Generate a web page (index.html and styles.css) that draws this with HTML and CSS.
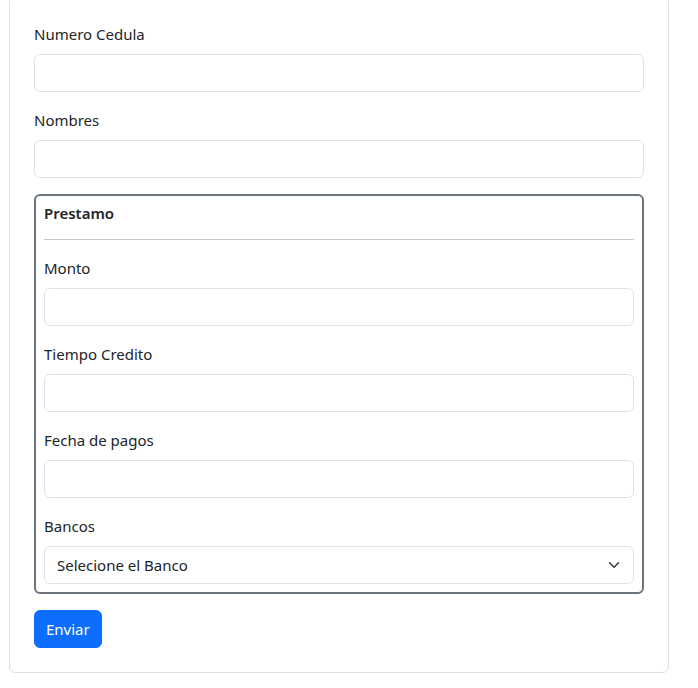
FILE: index.html
```html
<!DOCTYPE html>
<html lang="es">
<head>
<meta charset="utf-8">
<title>Formulario</title>
<link rel="stylesheet" href="styles.css">
</head>
<body>
<div class="card">
  <form class="card-body">
    <div class="field">
      <label class="form-label" for="cedula">Numero Cedula</label>
      <input class="form-control" id="cedula" type="text">
    </div>
    <div class="field">
      <label class="form-label" for="nombres">Nombres</label>
      <input class="form-control" id="nombres" type="text">
    </div>
    <fieldset class="group">
      <h6 class="group-title">Prestamo</h6>
      <hr class="divider">
      <div class="field">
        <label class="form-label" for="monto">Monto</label>
        <input class="form-control" id="monto" type="text">
      </div>
      <div class="field">
        <label class="form-label" for="tiempo">Tiempo Credito</label>
        <input class="form-control" id="tiempo" type="text">
      </div>
      <div class="field">
        <label class="form-label" for="fecha">Fecha de pagos</label>
        <input class="form-control" id="fecha" type="text">
      </div>
      <div class="field last">
        <label class="form-label" for="banco">Bancos</label>
        <div class="select-wrap">
          <select class="form-select" id="banco">
            <option>Selecione el Banco</option>
          </select>
          <svg class="chev" width="12" height="12" viewBox="0 0 16 16"><path fill="none" stroke="#343a40" stroke-linecap="round" stroke-linejoin="round" stroke-width="2" d="m2 5 6 6 6-6"/></svg>
        </div>
      </div>
    </fieldset>
    <button class="btn" type="button">Enviar</button>
  </form>
</div>
</body>
</html>
```
FILE: styles.css
```css
* { box-sizing: border-box; }
html, body { margin: 0; padding: 0; background: #fff; }
body {
  font-family: "Noto Sans", "Open Sans", Arial, sans-serif;
  font-size: 16px;
  line-height: 1.5;
  color: #212529;
}
.card {
  margin: -3px 0 0 9px;
  width: 660px;
  border: 1px solid #dfdfdf;
  border-radius: 6px;
  background: #fff;
}
.card-body {
  padding: 24px;
  display: block;
  margin: 0;
}
.field { margin-bottom: 16px; }
.field.last { margin-bottom: 0; }
.form-label {
  display: block;
  margin-bottom: 8px;
  font-size: 15px;
  line-height: 24px;
}
.form-control, .form-select {
  display: block;
  width: 100%;
  height: 38px;
  padding: 6px 12px;
  font: inherit;
  font-size: 15px;
  color: #212529;
  background: #fff;
  border: 1px solid #dee2e6;
  border-radius: 6px;
  outline: none;
}
.select-wrap { position: relative; }
.form-select {
  appearance: none;
  -webkit-appearance: none;
  padding-right: 36px;
}
.chev {
  position: absolute;
  right: 14px;
  top: 13px;
  width: 12px;
  height: 12px;
  pointer-events: none;
}
.group {
  margin: 0 0 16px;
  padding: 8px;
  border: 2px solid #6c757d;
  border-radius: 6px;
  min-width: 0;
}
.group-title {
  margin: 0 0 8px;
  font-size: 15px;
  font-weight: 600;
  line-height: 19.2px;
}
.divider {
  margin: 16px 0;
  border: 0;
  border-top: 1px solid #c6c7c8;
  height: 0;
}
.btn {
  display: inline-block;
  height: 38px;
  padding: 6px 11px;
  font: inherit;
  font-size: 15px;
  color: #fff;
  background: #0d6efd;
  border: 1px solid #0d6efd;
  border-radius: 6px;
  cursor: pointer;
}
```
